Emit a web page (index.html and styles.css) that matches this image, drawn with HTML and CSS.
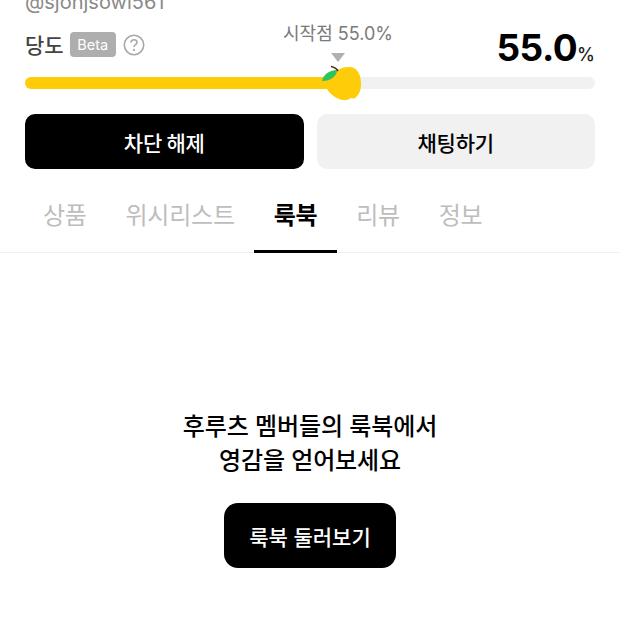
FILE: index.html
```html
<!DOCTYPE html>
<html lang="ko">
<head>
<meta charset="utf-8">
<title>룩북</title>
<link rel="stylesheet" href="styles.css">
</head>
<body>
<div class="page">
  <section class="profile">
    <div class="handle">@sjonjsowl561</div>
    <div class="sweet-head">
      <div class="sweet-label">
        <span class="sweet-title">당도</span>
        <span class="beta">Beta</span>
        <svg class="help" width="22" height="22" viewBox="0 0 22 22"><circle cx="11" cy="11" r="9.7" fill="none" stroke="#a8a8a8" stroke-width="1.6"/><path d="M8 8.6c0-1.7 1.3-2.8 3-2.8s3 1.1 3 2.6c0 2.3-3 2.3-3 4.6" fill="none" stroke="#a8a8a8" stroke-width="1.6"/><circle cx="11" cy="15.9" r="1.1" fill="#a8a8a8"/></svg>
      </div>
      <div class="start-mark">
        <span class="start-text">시작점 55.0%</span>
        <span class="start-arrow"></span>
      </div>
      <div class="value"><span class="value-num">55.0</span><span class="value-unit">%</span></div>
    </div>
    <div class="track">
      <div class="fill" style="width:55%"></div>
      <svg class="fruit" width="44" height="40" viewBox="0 0 44 40">
        <path d="M18 6C22 3 30 2 34 4C39 7 41 13 41 19C41 25 40 29 37 32C35 35 33 34.500 31 34C29 35.500 27 36.500 23 36C16 35 9 29 7 25L5 19Z" fill="#ffcc0a"/>
        <path d="M2 17C3 11 9 6 17 6C17 12 11 17 2 17Z" fill="#2fc35f"/>
        <path d="M11 2.500C14 3 16.500 4.500 18 7" fill="none" stroke="#4a2c12" stroke-width="1.600"/>
      </svg>
    </div>
    <div class="actions">
      <button class="btn btn-dark">차단 해제</button>
      <button class="btn btn-light">채팅하기</button>
    </div>
  </section>
  <nav class="tabs">
    <a class="tab">상품</a>
    <a class="tab">위시리스트</a>
    <a class="tab tab-active">룩북</a>
    <a class="tab">리뷰</a>
    <a class="tab">정보</a>
  </nav>
  <section class="empty">
    <p class="empty-text">후루츠 멤버들의 룩북에서<br>영감을 얻어보세요</p>
    <button class="browse">룩북 둘러보기</button>
  </section>
</div>
</body>
</html>
```

FILE: styles.css
```css
* { box-sizing: border-box; }
html, body { margin: 0; padding: 0; }
body {
  width: 620px;
  height: 620px;
  overflow: hidden;
  background: #fff;
  font-family: Inter, "Noto Sans CJK KR", sans-serif;
  color: #000;
}
.page { display: flex; flex-direction: column; margin-top: -8px; }
.profile { padding: 0 25px; }
.handle { font-size: 20px; line-height: 20px; color: #8a8a8a; }
.sweet-head {
  display: flex;
  align-items: flex-start;
  height: 49px;
  margin-top: 10px;
  position: relative;
}
.sweet-label { display: flex; align-items: center; height: 30px; margin-top: 7px; }
.sweet-title { font-size: 21px; font-weight: 500; color: #444; }
.beta {
  margin: 1px 0 0 6px;
  width: 46px;
  height: 25px;
  border-radius: 4px;
  background: #aeaeae;
  color: #fff;
  font-size: 14.500px;
  line-height: 25px;
  text-align: center;
}
.help { margin: 2px 0 0 7px; }
.start-mark {
  position: absolute;
  left: 313px;
  top: 0;
  transform: translateX(-50%);
  display: flex;
  flex-direction: column;
  align-items: center;
}
.start-text { font-size: 18px; line-height: 24px; color: #7a7a7a; white-space: nowrap; }
.start-arrow {
  width: 0;
  height: 0;
  margin-top: 7px;
  border-left: 7px solid transparent;
  border-right: 7px solid transparent;
  border-top: 9px solid #b0b0b0;
}
.value { margin-left: auto; margin-top: 4px; display: flex; align-items: baseline; line-height: 44px; }
.value-num { font-size: 37px; font-weight: 700; letter-spacing: -0.5px; }
.value-unit { font-size: 18px; font-weight: 500; color: #222; }
.track {
  position: relative;
  height: 12px;
  margin-top: 6px;
  border-radius: 6px;
  background: #f1f1f1;
}
.fill { height: 100%; border-radius: 6px; background: #ffcc0a; }
.fruit { position: absolute; left: 295px; top: -13px; }
.actions { display: flex; gap: 13px; margin-top: 25px; }
.btn {
  flex: 1;
  height: 55px;
  border: 0;
  border-radius: 10px;
  font-family: inherit;
  font-size: 21px;
  font-weight: 500;
  letter-spacing: -0.2px;
  word-spacing: -1px;
}
.btn-dark { background: #000; color: #fff; }
.btn-light { background: #f1f1f1; color: #000; }
.tabs {
  display: flex;
  height: 84px;
  padding-left: 23.500px;
  border-bottom: 1px solid #f0f0f0;
}
.tab {
  display: block;
  padding: 0 19.400px;
  font-size: 24px;
  font-weight: 400;
  letter-spacing: -0.2px;
  line-height: 94px;
  color: #bdbdbd;
  position: relative;
}
.tab-active { color: #000; font-weight: 700; }
.tab-active::after {
  content: "";
  position: absolute;
  left: 0;
  right: 0;
  bottom: -1px;
  height: 3px;
  background: #000;
}
.empty { display: flex; flex-direction: column; align-items: center; padding-top: 157px; }
.empty-text {
  margin: 0;
  font-size: 24px;
  font-weight: 500;
  letter-spacing: -0.1px;
  line-height: 34px;
  text-align: center;
}
.browse {
  margin-top: 25px;
  width: 172px;
  height: 65px;
  border: 0;
  border-radius: 14px;
  background: #000;
  color: #fff;
  font-family: inherit;
  font-size: 21px;
  font-weight: 500;
}
```
